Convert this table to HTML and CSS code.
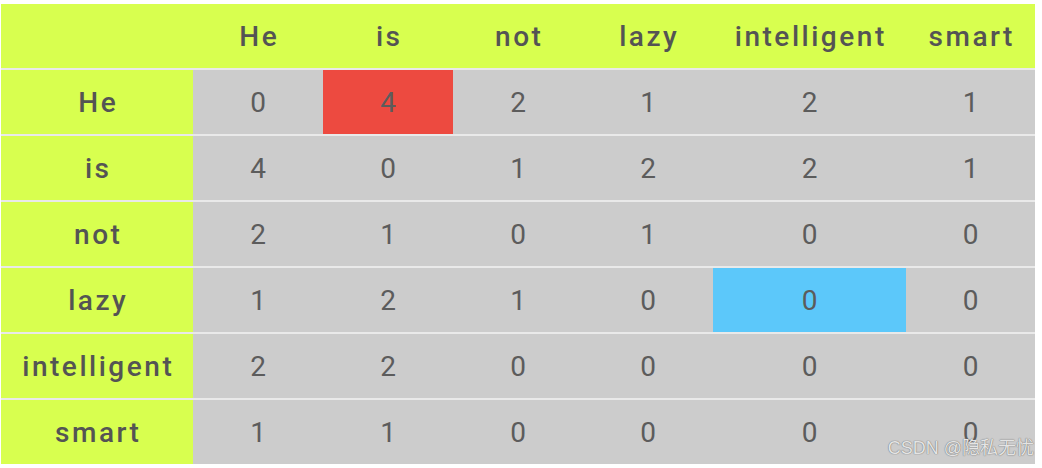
FILE: index.html
```html
<!DOCTYPE html>
<html>
<head>
<meta charset="utf-8">
<link rel="stylesheet" href="styles.css">
</head>
<body>
<div class="page">
  <div class="matrix">
    <div class="hd"></div><div class="hd">He</div><div class="hd">is</div><div class="hd">not</div><div class="hd">lazy</div><div class="hd">intelligent</div><div class="hd">smart</div>
    <div class="lb">He</div><div class="c">0</div><div class="c red">4</div><div class="c">2</div><div class="c">1</div><div class="c">2</div><div class="c">1</div>
    <div class="lb">is</div><div class="c">4</div><div class="c">0</div><div class="c">1</div><div class="c">2</div><div class="c">2</div><div class="c">1</div>
    <div class="lb">not</div><div class="c">2</div><div class="c">1</div><div class="c">0</div><div class="c">1</div><div class="c">0</div><div class="c">0</div>
    <div class="lb">lazy</div><div class="c">1</div><div class="c">2</div><div class="c">1</div><div class="c">0</div><div class="c blue">0</div><div class="c">0</div>
    <div class="lb">intelligent</div><div class="c">2</div><div class="c">2</div><div class="c">0</div><div class="c">0</div><div class="c">0</div><div class="c">0</div>
    <div class="lb">smart</div><div class="c">1</div><div class="c">1</div><div class="c">0</div><div class="c">0</div><div class="c">0</div><div class="c">0</div>
  </div>
  <div class="mark">CSDN @隐私无忧</div>
</div>
</body>
</html>
```
FILE: styles.css
```css
html, body {
  margin: 0;
  padding: 0;
  background: #ffffff;
}
.page {
  position: relative;
  width: 1042px;
  height: 468px;
  padding: 4px 0 0 1px;
  box-sizing: border-box;
}
.matrix {
  display: grid;
  grid-template-columns: 192px 130px 130px 130px 130px 193px 129px;
  grid-auto-rows: 64px;
  row-gap: 2px;
  width: 1034px;
  background: #e9e9e9;
  font-family: Roboto, "Liberation Sans", sans-serif;
  font-size: 28px;
}
.hd, .lb, .c {
  display: flex;
  align-items: center;
  justify-content: center;
}
.hd, .lb {
  background: #d8ff4f;
  color: #545454;
  font-weight: 500;
  letter-spacing: 0.09em;
  text-indent: 0.09em;
}
.c {
  background: #cccccc;
  color: #5c5c5c;
  font-weight: 400;
}
.c.red {
  background: #ed4a40;
}
.c.blue {
  background: #5cc8fa;
}
.mark {
  position: absolute;
  right: 8px;
  bottom: 9px;
  font-family: "Liberation Sans", "Noto Sans CJK SC", sans-serif;
  font-size: 18px;
  color: #e4e4e4;
  text-shadow: 0 0 1px #777, 0 0 1px #777;
}
```
